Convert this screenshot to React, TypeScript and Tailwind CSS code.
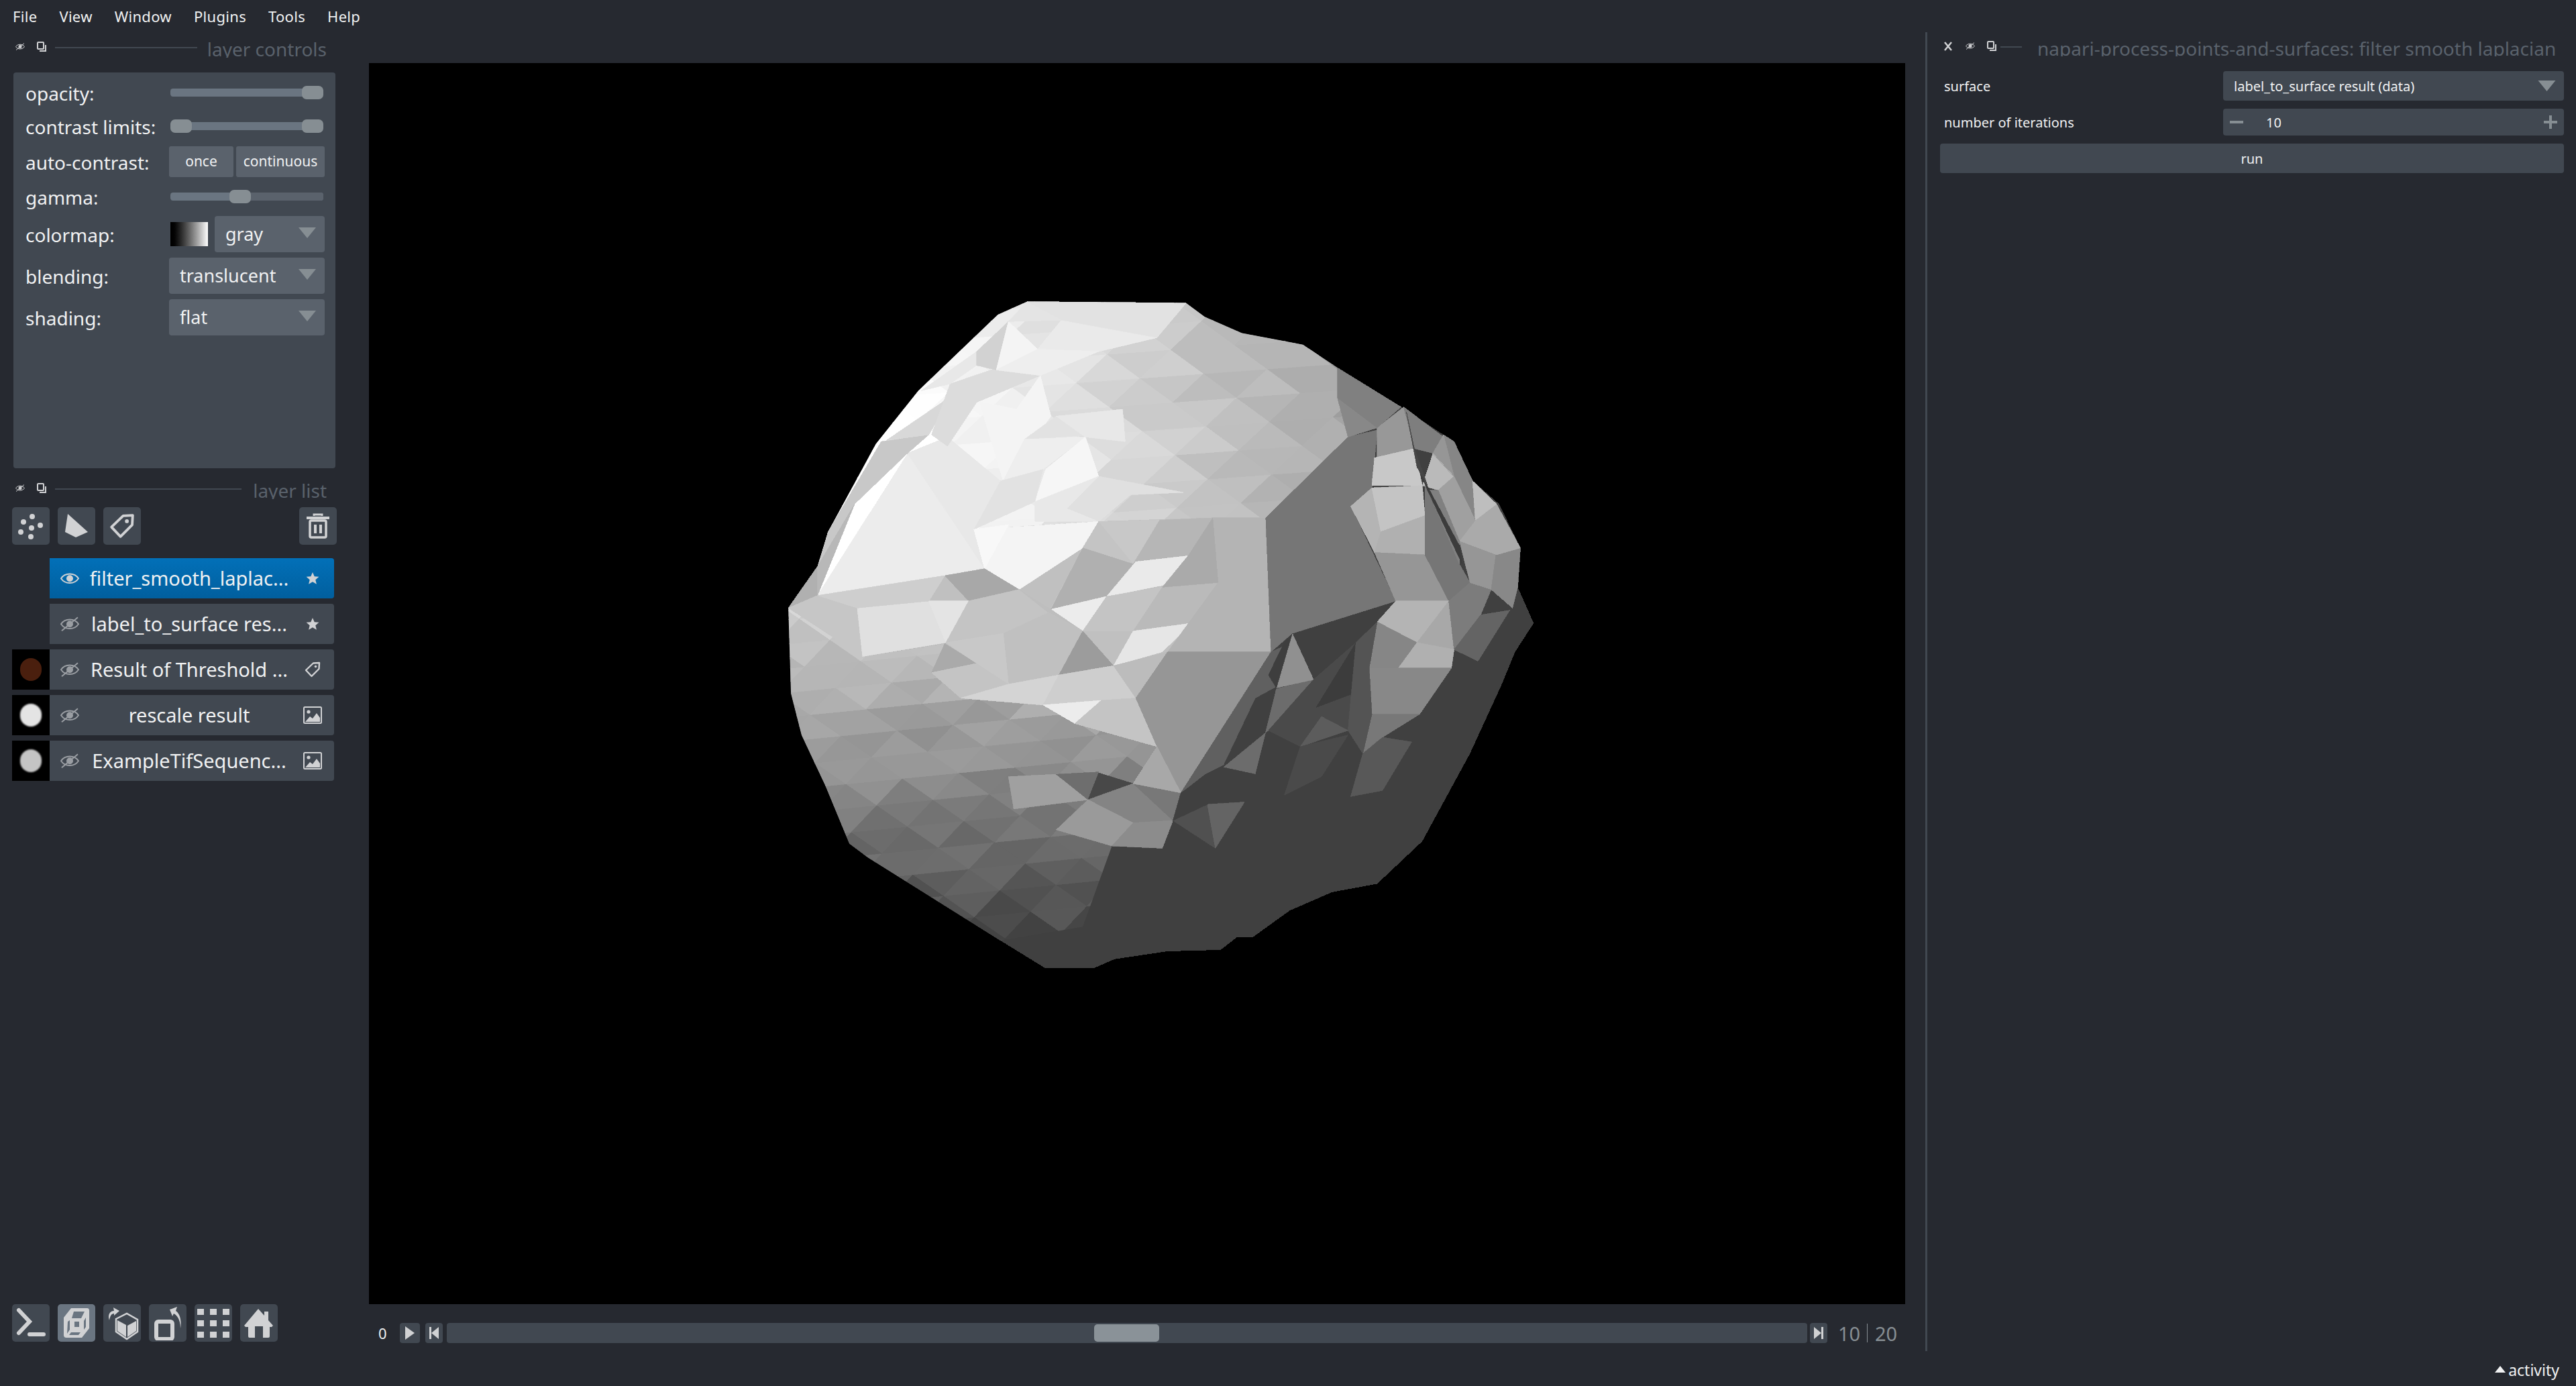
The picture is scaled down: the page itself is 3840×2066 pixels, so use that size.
import React from 'react';

const ICON = '#d1d2d4';

// ---------- small icons ----------
const EyeIcon = ({ off, size = 28, color = ICON }: { off?: boolean; size?: number; color?: string }) => (
  <svg width={size} height={size * 0.8} viewBox="0 0 28 22">
    <path d="M1 11 C7 2 21 2 27 11 C21 20 7 20 1 11 Z" fill="none" stroke={color} strokeWidth="2" />
    <circle cx="14" cy="11" r="5" fill={color} />
    {off && <path d="M2 21 L26 1" stroke={color} strokeWidth="2" />}
  </svg>
);

const FloatIcon = () => (
  <svg width="14" height="16" viewBox="0 0 14 16">
    <rect x="1" y="1" width="9" height="10" rx="1" fill="none" stroke={ICON} strokeWidth="2" />
    <path d="M4 14 H13 V5" fill="none" stroke={ICON} strokeWidth="2" />
  </svg>
);

const Star = () => (
  <svg width="20" height="20" viewBox="0 0 20 20">
    <path d="M10 1 L12.7 7.2 L19.4 7.8 L14.3 12.2 L15.9 18.8 L10 15.3 L4.1 18.8 L5.7 12.2 L.6 7.8 L7.3 7.2 Z" fill={ICON} />
  </svg>
);

const Tag = ({ size = 24 }: { size?: number }) => (
  <svg width={size} height={size} viewBox="0 0 24 24">
    <path d="M2 13 L13 2.5 L22 2 L21.5 11 L10.5 22 Z" fill="none" stroke={ICON} strokeWidth="2.4" strokeLinejoin="round" />
    <circle cx="16.5" cy="7.5" r="1.8" fill={ICON} />
  </svg>
);

const ImageIcon = () => (
  <svg width="28" height="26" viewBox="0 0 28 26">
    <rect x="1" y="1" width="26" height="24" rx="1.5" fill="none" stroke={ICON} strokeWidth="2" />
    <circle cx="8" cy="8" r="2.6" fill={ICON} />
    <path d="M3 23 L10 15 L14 18 L20 10 L25 17 V23 Z" fill={ICON} />
  </svg>
);

const Arrow = ({ w = 26, h = 16 }: { w?: number; h?: number }) => (
  <svg width={w} height={h} viewBox="0 0 26 16">
    <path d="M0 0 H26 L13 16 Z" fill="#868e93" />
  </svg>
);

// ---------- mesh ----------
type Facet = [number, string];

const hash = (a: number, b: number) => {
  const s = Math.sin(a * 12.9898 + b * 78.233) * 43758.5453;
  return s - Math.floor(s);
};

const g = (v: number) => {
  const n = Math.max(0, Math.min(255, Math.round(v)));
  return `rgb(${n},${n},${n})`;
};

const lattice = (
  ox: number,
  oy: number,
  ux: number,
  uy: number,
  vx: number,
  vy: number,
  n: number,
  shade: (x: number, y: number) => number,
  noise: number
) => {
  const tris: Facet[] = [];
  for (let i = -n; i < n; i++) {
    for (let j = -n; j < n; j++) {
      const a = [ox + i * ux + j * vx, oy + i * uy + j * vy];
      const b = [a[0] + ux, a[1] + uy];
      const c = [a[0] + ux + vx, a[1] + uy + vy];
      const d = [a[0] + vx, a[1] + vy];
      const c1x = (a[0] + b[0] + c[0]) / 3;
      const c1y = (a[1] + b[1] + c[1]) / 3;
      const c2x = (a[0] + c[0] + d[0]) / 3;
      const c2y = (a[1] + c[1] + d[1]) / 3;
      tris.push([shade(c1x, c1y) + (hash(i, j) - 0.5) * noise, `${a} ${b} ${c}`]);
      tris.push([shade(c2x, c2y) + (hash(j + 7, i + 3) - 0.5) * noise, `${a} ${c} ${d}`]);
    }
  }
  return tris;
};

const SILHOUETTE =
  '545,72 845,75 880,105 950,140 1065,165 1130,215 1250,300 1350,375 1385,460 1435,510 1475,605 1470,690 1500,768 1465,830 1440,900 1380,1050 1290,1240 1205,1332 1120,1350 1040,1390 970,1448 940,1448 910,1475 810,1478 710,1495 670,1515 580,1515 495,1455 245,1275 210,1245 165,1120 120,1010 100,920 95,735 150,645 170,570 260,380 340,265 490,100';
const UPPER =
  '545,72 845,75 880,105 950,140 1065,165 1130,215 1150,365 995,540 895,540 795,545 680,548 445,565 465,650 150,708 150,645 170,570 260,380 340,265 490,100';
const LOWER =
  '95,735 150,708 225,735 235,840 390,812 365,875 420,930 575,945 635,985 790,1035 745,1115 835,1135 820,1195 800,1255 705,1250 650,1425 495,1455 245,1275 210,1245 165,1120 120,1010 100,920';
const MIDDLE =
  '150,708 465,650 530,695 680,548 895,540 995,540 1005,830 835,1135 745,1115 790,1035 635,985 575,945 420,930 365,875 390,812 235,840 225,735';

const upperGrid = lattice(700, 300, 62, 52, 58, -62, 14, (x, y) => 238 - (x - 500) * 0.11 + (y - 300) * 0.01, 14);
const lowerGrid = lattice(300, 1000, 58, 46, 48, -58, 16, (x, y) => 196 - (y - 800) * 0.19 - (x - 300) * 0.01, 22);

const FACETS: Facet[] = [
  [192, MIDDLE],
  [176, '95,735 150,645 150,708'],
  // upper left, bright
  [236, '150,708 320,400 395,365 470,650'],
  [232, '320,400 395,365 495,460 445,565 465,650'],
  [200, '270,375 360,360 320,400 220,510 150,650 170,570'],
  [184, '150,645 220,510 150,708'],
  [216, '280,372 385,290 410,260 360,360'],
  [220, '400,250 490,215 570,232 450,290 395,385 365,360'],
  [232, '345,265 450,180 450,210 400,250'],
  [210, '450,180 510,115 487,220 450,210'],
  [244, '510,115 565,175 487,220'],
  [228, '545,72 615,112 510,115'],
  [234, '610,112 790,150 680,180 565,175'],
  [226, '545,72 845,75 790,150 610,112'],
  [238, '487,220 565,175 680,180 570,232'],
  [244, '455,288 525,305 570,232 590,320 500,460'],
  [226, '540,370 600,320 655,362'],
  [238, '540,370 655,365 575,435 500,460'],
  [246, '655,365 680,450 560,505 580,435'],
  [232, '600,320 725,305 730,375 655,365'],
  [226, '495,460 575,435 560,505 445,565'],
  [224, '680,450 840,485 740,490 680,548 620,520'],
  [232, '560,505 680,450 620,520 680,548 560,548'],
  [244, '445,565 680,548 650,605 530,695 465,650'],
  [248, '445,565 510,555 465,650'],
  // middle band
  [198, '150,708 225,735 235,840 95,735'],
  [200, '680,548 795,545 745,640'],
  [182, '795,545 895,540 850,620 745,640'],
  [196, '650,605 680,548 745,640 590,735'],
  [176, '650,605 745,640 695,710 590,738'],
  [234, '750,635 850,622 805,685 695,710'],
  [236, '590,738 695,710 650,785'],
  [196, '650,785 695,710 800,690 745,785'],
  [186, '800,690 905,680 855,768 745,785'],
  [230, '745,785 855,768 800,830 708,860'],
  [168, '465,650 530,695 435,720 390,665'],
  [224, '225,735 360,720 392,810 235,840'],
  [228, '360,720 435,720 392,810'],
  [206, '150,708 390,665 360,720 225,735'],
  [196, '435,720 530,695 585,745 500,790 392,810'],
  [190, '530,695 590,738 650,785 585,745'],
  [192, '500,790 585,745 650,785 605,880 510,900'],
  [156, '650,785 708,860 605,880'],
  [170, '390,812 450,855 365,875'],
  [200, '392,810 500,790 510,900 450,855'],
  [196, '365,875 450,855 510,900 420,930'],
  [212, '510,900 605,880 575,945 420,930'],
  [206, '605,880 708,860 750,930 575,945'],
  [188, '708,860 810,830 750,930'],
  [236, '575,945 685,935 635,985'],
  [196, '685,935 750,930 790,1035 635,985'],
  // flat panels
  [180, '895,540 995,540 1005,830 810,830 905,680'],
  [170, '850,620 895,540 905,680 800,690'],
  [150, '810,830 1005,830 960,930 880,1060 835,1135 790,1035 750,930'],
  [130, '880,1060 960,930 835,1135'],
  [118, '995,540 1150,365 1205,350 1195,480 1155,515 1240,720 1045,790 1005,830'],
  // lower lit facets
  [160, '510,1100 600,1095 660,1150 520,1170'],
  [110, '600,1095 680,1090 660,1150'],
  [72, '660,1150 680,1092 745,1115'],
  [132, '660,1150 745,1115 820,1195 745,1200'],
  [154, '600,1215 660,1150 745,1200 705,1250'],
  [120, '745,1115 835,1135 820,1195'],
  [140, '745,1200 820,1195 800,1255 705,1250'],
  [168, '745,1115 790,1035 835,1135'],
  // shaded folds in the middle
  [96, '835,1135 1005,830 1035,815 1015,905 975,930 915,1075 880,1095'],
  [108, '915,1080 975,1095 1015,910 1085,890 1000,1000'],
  [144, '1045,790 1085,890 1015,908'],
  [62, '1045,790 1015,908 1000,880 1030,810'],
  [74, '1085,890 1165,810 1150,1000 1060,1035 1000,1000'],
  [60, '1090,950 1165,810 1160,920'],
  [92, '1060,1035 1150,1000 1100,970'],
  [80, '820,1195 885,1160 900,1255'],
  [100, '885,1160 955,1155 900,1255'],
  [64, '835,1135 915,1080 975,1095 885,1160 820,1195'],
  [74, '1030,1140 1060,1035 1150,1010 1100,1100'],
  // right side
  [136, '1130,280 1205,345 1150,365'],
  [152, '1205,345 1255,300 1275,390 1205,410'],
  [128, '1130,215 1250,300 1205,345 1130,280'],
  [200, '1200,410 1275,390 1290,470 1195,470'],
  [180, '1155,515 1195,475 1212,570 1200,615'],
  [196, '1195,475 1290,470 1295,535 1212,570'],
  [176, '1212,570 1295,535 1295,620 1200,615'],
  [150, '1200,615 1295,620 1340,720 1240,720'],
  [118, '1295,470 1360,640 1380,680 1340,720 1295,620'],
  [180, '1240,720 1340,720 1280,810 1205,765'],
  [168, '1340,720 1350,825 1280,810'],
  [134, '1205,765 1280,810 1245,865 1190,865'],
  [176, '1280,810 1350,825 1345,865 1245,865'],
  [136, '1190,865 1345,865 1285,965 1195,965'],
  [120, '1195,965 1285,965 1215,1015 1178,1050'],
  [84, '1165,810 1205,765 1190,865 1195,965 1178,1050 1150,1000'],
  [88, '1178,1050 1215,1015 1270,1025 1215,1130 1155,1143'],
  [124, '1340,720 1380,680 1420,695 1400,750 1350,825'],
  [100, '1350,825 1400,750 1455,740 1395,850'],
  [150, '1380,680 1420,695 1460,735 1430,610 1360,590'],
  [136, '1420,695 1430,610 1475,605 1470,690 1460,735'],
  [170, '1430,510 1475,605 1430,620 1360,590 1390,545'],
  [134, '1330,360 1350,375 1385,460 1390,545 1350,450'],
  [126, '1255,300 1330,365 1310,400 1275,390'],
  [186, '1310,400 1350,450 1320,480 1290,470'],
  [190, '1385,460 1430,510 1390,545'],
  [150, '1310,400 1330,360 1350,450'],
  [160, '1320,480 1350,450 1390,545 1360,590'],
  [128, '1300,480 1320,480 1360,590 1360,640'],
  [60, '1285,440 1360,600 1365,640 1300,480'],
  [70, '1260,310 1275,390 1300,470 1280,430'],
];

const Mesh = () => (
  <svg
    viewBox="0 0 1568 1568"
    preserveAspectRatio="none"
    width="1240"
    height="1080"
    shapeRendering="crispEdges"
    className="ml-[550px] mt-[306px] block"
  >
    <defs>
      <clipPath id="upper-clip">
        <polygon points={UPPER} />
      </clipPath>
      <clipPath id="lower-clip">
        <polygon points={LOWER} />
      </clipPath>
    </defs>
    <polygon points={SILHOUETTE} fill="#404040" />
    <g clipPath="url(#upper-clip)">
      {upperGrid.map(([v, pts], i) => (
        <polygon key={i} points={pts} fill={g(v)} stroke={g(v)} />
      ))}
    </g>
    <g clipPath="url(#lower-clip)">
      {lowerGrid.map(([v, pts], i) => (
        <polygon key={i} points={pts} fill={g(v)} stroke={g(v)} />
      ))}
    </g>
    {FACETS.map(([v, pts], i) => (
      <polygon key={i} points={pts} fill={g(v)} stroke={g(v)} />
    ))}
  </svg>
);

// ---------- panel parts ----------
const TitleBar = ({ title, lineClass }: { title: string; lineClass: string }) => (
  <div className="h-[28px] overflow-hidden flex items-start ml-[5px]">
    <div className="w-[32px] h-[24px] flex items-center">
      <EyeIcon off size={14} />
    </div>
    <div className="w-[27px] h-[24px] flex items-center">
      <FloatIcon />
    </div>
    <div className={`h-[2px] bg-[#414851] mt-[12px] ${lineClass}`} />
    <span className="ml-auto pr-[13px] text-[28px] leading-[30px] text-[#5a626c] whitespace-nowrap">{title}</span>
  </div>
);

const Row = ({ label, h, children }: { label: string; h: string; children: React.ReactNode }) => (
  <div className={`flex items-center ${h}`}>
    <div className="w-[232px] pl-[18px] pt-[2px] text-[28px] leading-[36px] text-[#f0f1f2] whitespace-nowrap">{label}</div>
    <div className="w-[232px]">{children}</div>
  </div>
);

const Slider = ({ handles, fill }: { handles: number[]; fill?: number }) => (
  <div className="relative mx-[2px] h-[12px] rounded-[4px] bg-[#6a7581] overflow-visible">
    {fill !== undefined && (
      <div className="absolute top-0 bottom-0 right-0 rounded-r-[4px] bg-[#5a626c]" style={{ left: fill }} />
    )}
    {handles.map(left => (
      <div
        key={left}
        className="absolute top-[-4px] h-[20px] w-[32px] rounded-[7px] bg-[#868e93]"
        style={{ left }}
      />
    ))}
  </div>
);

const Combo = ({ text, className }: { text: string; className: string }) => (
  <div className={`h-[54px] rounded-[4px] bg-[#5a626c] flex items-center text-[27px] text-[#f0f1f2] ${className}`}>
    <span>{text}</span>
    <span className="ml-auto mr-[13px] mb-[4px]">
      <Arrow />
    </span>
  </div>
);

const LAYERS = [
  { name: 'filter_smooth_laplac...', kind: 'surface', active: true },
  { name: 'label_to_surface res...', kind: 'surface' },
  { name: 'Result of Threshold ...', kind: 'labels', thumb: '#4a1f0e' },
  { name: 'rescale result', kind: 'image', thumb: '#e4e4e4', blur: true },
  { name: 'ExampleTifSequenc...', kind: 'image', thumb: '#c4c4c4', blur: true },
];

const LayerRow = ({
  name,
  kind,
  active,
  thumb,
  blur,
}: {
  name: string;
  kind: string;
  active?: boolean;
  thumb?: string;
  blur?: boolean;
}) => (
  <div className="flex h-[60px] w-[480px]">
    <div className={`w-[56px] h-full flex items-center justify-center ${thumb ? 'bg-black' : ''}`}>
      {thumb && <div className={`w-[32px] h-[34px] rounded-full ${blur ? 'blur-[1px]' : ''}`} style={{ background: thumb }} />}
    </div>
    <div
      className={`w-[424px] h-full rounded-r-[4px] flex items-center ${
        active ? 'bg-gradient-to-b from-[#0270b8] to-[#015f9e]' : 'bg-[#414851]'
      }`}
    >
      <div className="w-[44px] pl-[16px] shrink-0">
        <EyeIcon off={!active} color={active ? ICON : '#9a9ea3'} />
      </div>
      <div className="w-[328px] text-center text-[29px] text-[#f0f1f2] whitespace-nowrap overflow-hidden">{name}</div>
      <div className="w-[40px] flex justify-center">
        {kind === 'surface' && <Star />}
        {kind === 'labels' && <Tag />}
        {kind === 'image' && <ImageIcon />}
      </div>
    </div>
  </div>
);

const ToolButton = ({ children, active }: { children: React.ReactNode; active?: boolean }) => (
  <div className={`w-[56px] h-[56px] rounded-[5px] flex items-center justify-center ${active ? 'bg-[#6a7581]' : 'bg-[#414851]'}`}>
    {children}
  </div>
);

const App: React.FC = () => {
  return (
    <div className="w-[3840px] h-[2066px] overflow-hidden bg-[#262930] text-[#f0f1f2] font-['Noto_Sans',sans-serif]">
      {/* menu bar */}
      <div className="h-[48px] pl-[19px] flex items-center gap-[33px] text-[22px] tracking-[0.3px]">
        {['File', 'View', 'Window', 'Plugins', 'Tools', 'Help'].map(m => (
          <span key={m}>{m}</span>
        ))}
      </div>

      <div className="flex h-[1966px]">
        {/* left dock */}
        <div className="w-[550px] shrink-0 pl-[18px] pr-[50px] flex flex-col">
          <div className="mt-[10px] w-[482px]">
            <TitleBar title="layer controls" lineClass="w-[212px]" />
          </div>
          <div className="mt-[22px] ml-[2px] w-[480px] h-[590px] rounded-[4px] bg-[#414851] pt-[10px] flex flex-col gap-[8px]">
            <Row label="opacity:" h="h-[40px]">
              <Slider handles={[196]} />
            </Row>
            <Row label="contrast limits:" h="h-[44px]">
              <Slider handles={[0, 196]} />
            </Row>
            <Row label="auto-contrast:" h="h-[46px]">
              <div className="flex gap-[4px] text-[21px] text-[#f0f1f2]">
                <div className="w-[96px] h-[46px] rounded-[3px] bg-[#5a626c] flex items-center justify-center">once</div>
                <div className="w-[132px] h-[46px] rounded-[3px] bg-[#5a626c] flex items-center justify-center">continuous</div>
              </div>
            </Row>
            <Row label="gamma:" h="h-[42px]">
              <Slider handles={[88]} fill={110} />
            </Row>
            <Row label="colormap:" h="h-[54px]">
              <div className="flex items-center">
                <div className="ml-[2px] w-[56px] h-[36px] bg-gradient-to-r from-black to-white" />
                <Combo text="gray" className="ml-[10px] w-[164px] pl-[16px]" />
              </div>
            </Row>
            <Row label="blending:" h="h-[54px]">
              <Combo text="translucent" className="pl-[16px]" />
            </Row>
            <Row label="shading:" h="h-[54px]">
              <Combo text="flat" className="pl-[16px]" />
            </Row>
          </div>

          <div className="mt-[18px] w-[482px]">
            <TitleBar title="layer list" lineClass="w-[278px]" />
          </div>
          <div className="mt-[12px] w-[484px] flex gap-[12px]">
            <ToolButton>
              <svg width="40" height="40" viewBox="0 0 40 40" fill={ICON}>
                <circle cx="22" cy="6" r="4" />
                <circle cx="9" cy="14" r="4" />
                <circle cx="34" cy="19" r="4" />
                <circle cx="21" cy="23" r="4" />
                <circle cx="5" cy="29" r="4" />
                <circle cx="20" cy="36" r="4" />
              </svg>
            </ToolButton>
            <ToolButton>
              <svg width="36" height="38" viewBox="0 0 36 38">
                <path d="M5 1 L35 28 L17 36 L1 28 Z" fill={ICON} />
              </svg>
            </ToolButton>
            <ToolButton>
              <Tag size={38} />
            </ToolButton>
            <div className="ml-auto">
              <ToolButton>
                <svg width="36" height="38" viewBox="0 0 36 38" fill="none" stroke={ICON}>
                  <path d="M1 7 H35" strokeWidth="4" />
                  <path d="M12 4 V2 H24 V4" strokeWidth="3" />
                  <rect x="6" y="11" width="24" height="25" rx="2" strokeWidth="3.5" />
                  <path d="M14 17 V30 M22 17 V30" strokeWidth="4" />
                </svg>
              </ToolButton>
            </div>
          </div>
          <div className="mt-[20px] flex flex-col gap-[8px]">
            {LAYERS.map(l => (
              <LayerRow key={l.name} {...l} />
            ))}
          </div>

          {/* viewer buttons */}
          <div className="mt-auto mb-[14px] flex gap-[12px]">
            <ToolButton>
              <svg width="46" height="48" viewBox="0 0 46 48" fill="none" stroke={ICON} strokeLinecap="round">
                <path d="M5 5 L21 22 L5 39" strokeWidth="6" />
                <path d="M21 41 H42" strokeWidth="6" />
              </svg>
            </ToolButton>
            <ToolButton active>
              <svg width="40" height="48" viewBox="0 0 40 48">
                <path d="M12 2 H36 Q39 2 39 6 V32 L28 46 H5 Q1 46 1 42 V16 Z" fill={ICON} />
                <path d="M16 7 H32 L27 17 H13 Z M7 22 L10 20 V34 L6 40 Z M31 21 L34 16 V30 L31 34 Z M12 38 H26 L23 42 H9 Z" fill="#6a7581" />
                <rect x="17" y="22" width="7" height="8" fill="#6a7581" />
              </svg>
            </ToolButton>
            <ToolButton>
              <svg width="50" height="52" viewBox="0 0 50 52" fill="none">
                <path d="M16 20 L32 12 L48 21 V39 L32 50 L16 39 Z" stroke={ICON} strokeWidth="2.5" />
                <path d="M18 22 L31 29 V47 L18 38 Z" fill={ICON} />
                <path d="M33 30 L46 23 V38 L33 47 Z" fill={ICON} />
                <path d="M6 22 C3 14 7 8 13 8 L12 3 L21 8 L13 15 L13 12 C9 12 7 16 6 22 Z" fill={ICON} />
              </svg>
            </ToolButton>
            <ToolButton>
              <svg width="50" height="52" viewBox="0 0 50 52" fill="none">
                <rect x="8" y="24" width="24" height="26" rx="3" stroke={ICON} strokeWidth="6" />
                <path d="M44 34 C44 20 38 14 34 12 L32 16 L28 6 L39 2 L37 8 C43 12 46 22 44 34 Z" fill={ICON} />
              </svg>
            </ToolButton>
            <ToolButton>
              <div className="grid grid-cols-3 gap-x-[9px] gap-y-[8px]">
                {Array.from({ length: 9 }, (_, i) => (
                  <div key={i} className="w-[10px] h-[9px] bg-[#d1d2d4]" />
                ))}
              </div>
            </ToolButton>
            <ToolButton>
              <svg width="44" height="44" viewBox="0 0 44 44">
                <path d="M21 1 L30 11 V5 H36 V18 L43 26 L41 28 H38 V42 Q38 44 36 44 H28 V27 H16 V44 H8 Q6 44 6 42 V28 H2 L0 26 Z" fill={ICON} />
              </svg>
            </ToolButton>
          </div>
        </div>

        {/* viewer */}
        <div className="w-[2290px] shrink-0 pt-[46px]">
          <div className="h-[1850px] bg-black overflow-hidden">
            <Mesh />
          </div>
          <div className="mt-[28px] h-[30px] flex items-center">
            <span className="ml-[14px] w-[32px] text-[22px]">0</span>
            <div className="w-[30px] h-[30px] rounded-[4px] bg-[#414851] flex items-center justify-center">
              <svg width="14" height="20" viewBox="0 0 14 20"><path d="M0 0 L14 10 L0 20 Z" fill={ICON} /></svg>
            </div>
            <div className="ml-[8px] w-[26px] h-[30px] rounded-[4px] bg-[#414851] flex items-center justify-center">
              <svg width="14" height="18" viewBox="0 0 14 18"><path d="M0 0 H3 V18 H0 Z M14 0 V18 L3 9 Z" fill={ICON} /></svg>
            </div>
            <div className="ml-[6px] w-[2028px] h-[30px] rounded-[4px] bg-[#414851] relative">
              <div className="absolute left-[965px] top-[2px] w-[97px] h-[26px] rounded-[5px] bg-[#8a9298]" />
            </div>
            <div className="ml-[4px] w-[26px] h-[30px] rounded-[4px] bg-[#414851] flex items-center justify-center">
              <svg width="14" height="18" viewBox="0 0 14 18"><path d="M14 0 H11 V18 H14 Z M0 0 V18 L11 9 Z" fill={ICON} /></svg>
            </div>
            <span className="ml-[16px] w-[35px] text-[29px] leading-none text-[#868e93]">10</span>
            <div className="ml-[8px] w-[1px] h-[28px] bg-[#868e93]" />
            <span className="ml-[11px] text-[29px] leading-none text-[#868e93]">20</span>
          </div>
        </div>

        {/* divider */}
        <div className="ml-[30px] w-[3px] h-full bg-[#414851]" />

        {/* right dock */}
        <div className="flex-1 pl-[19px] pr-[18px]">
          <div className="mt-[9px] h-[27px] overflow-hidden flex items-start pl-[6px]">
            <div className="w-[32px] h-[24px] flex items-center">
              <svg width="12" height="14" viewBox="0 0 12 14">
                <path d="M1 1 L11 13 M11 1 L1 13" stroke={ICON} strokeWidth="2.5" />
              </svg>
            </div>
            <div className="w-[32px] h-[24px] flex items-center"><EyeIcon off size={14} /></div>
            <div className="w-[20px] h-[24px] flex items-center"><FloatIcon /></div>
            <div className="w-[32px] h-[2px] bg-[#414851] mt-[12px]" />
            <span className="ml-[23px] text-[28px] leading-[30px] text-[#5a626c] whitespace-nowrap">
              napari-process-points-and-surfaces: filter smooth laplacian
            </span>
          </div>
          <div className="mt-[22px] flex items-center h-[44px] text-[20px]">
            <span className="w-[422px] pl-[6px] pt-[2px]">surface</span>
            <div className="flex-1 h-full rounded-[4px] bg-[#414851] flex items-center pl-[16px]">
              <span className="pt-[2px]">label_to_surface result (data)</span>
              <span className="ml-auto mr-[12px]"><Arrow w={27} h={16} /></span>
            </div>
          </div>
          <div className="mt-[12px] flex items-center h-[40px] text-[20px]">
            <span className="w-[422px] pl-[6px] pt-[2px]">number of iterations</span>
            <div className="flex-1 h-full rounded-[4px] bg-[#414851] flex items-center pl-[10px]">
              <div className="w-[20px] h-[4px] bg-[#868e93]" />
              <span className="ml-[34px] pt-[2px]">10</span>
              <svg className="ml-auto mr-[10px]" width="20" height="20" viewBox="0 0 20 20">
                <path d="M0 8 H20 V12 H0 Z M8 0 H12 V20 H8 Z" fill="#868e93" />
              </svg>
            </div>
          </div>
          <div className="mt-[12px] h-[44px] rounded-[4px] bg-[#414851] flex items-center justify-center text-[20px] pt-[2px]">
            run
          </div>
        </div>
      </div>

      {/* status bar */}
      <div className="h-[52px] pr-[25px] pt-[4px] flex items-center justify-end text-[23px]">
        <svg className="mr-[4px] mb-[2px]" width="16" height="10" viewBox="0 0 16 10">
          <path d="M8 0 L16 10 H0 Z" fill="#f0f1f2" />
        </svg>
        activity
      </div>
    </div>
  );
};

export default App;
